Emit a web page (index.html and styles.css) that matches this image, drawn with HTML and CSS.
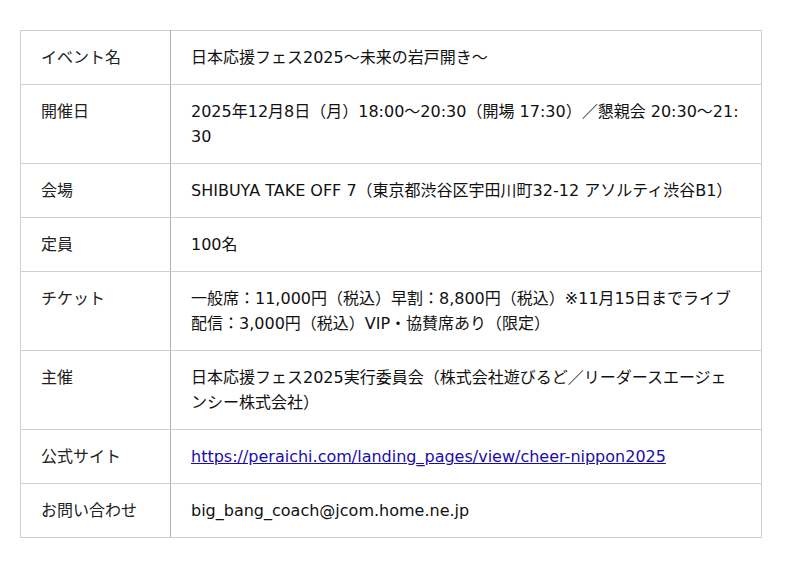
FILE: index.html
```html
<!DOCTYPE html>
<html lang="ja">
<head>
<meta charset="utf-8">
<link rel="stylesheet" href="styles.css">
</head>
<body>
<div class="wrap">
<table class="info">
<tr><th>イベント名</th><td>日本応援フェス2025〜未来の岩戸開き〜</td></tr>
<tr><th>開催日</th><td>2025年12月8日（月）18:00〜20:30（開場 17:30）／懇親会 20:30〜21:30</td></tr>
<tr><th>会場</th><td>SHIBUYA TAKE OFF 7（東京都渋谷区宇田川町32-12 アソルティ渋谷B1）</td></tr>
<tr><th>定員</th><td>100名</td></tr>
<tr><th>チケット</th><td>一般席：11,000円（税込）早割：8,800円（税込）※11月15日までライブ配信：3,000円（税込）VIP・協賛席あり（限定）</td></tr>
<tr><th>主催</th><td>日本応援フェス2025実行委員会（株式会社遊びるど／リーダースエージェンシー株式会社）</td></tr>
<tr><th>公式サイト</th><td><a href="#">https://peraichi.com/landing_pages/view/cheer-nippon2025</a></td></tr>
<tr><th>お問い合わせ</th><td>big_bang_coach@jcom.home.ne.jp</td></tr>
</table>
</div>
</body>
</html>
```
FILE: styles.css
```css
html, body {
  margin: 0;
  padding: 0;
  background: #fff;
}
.wrap {
  padding: 30px 38px 0 20px;
}
.info {
  width: 742px;
  border-collapse: collapse;
  font-family: "DejaVu Sans", "Noto Sans CJK JP", sans-serif;
  font-size: 16px;
  line-height: 25px;
  color: #111;
}
.info th, .info td {
  border: 1px solid #d0d0d0;
  padding: 14px 20px;
  text-align: left;
  vertical-align: top;
  font-weight: normal;
}
.info td {
  word-break: break-all;
}
.info th {
  width: 109px;
  color: #222;
  border-right-color: #b0b0b0;
}
.info a {
  color: #1a0dab;
}
```
